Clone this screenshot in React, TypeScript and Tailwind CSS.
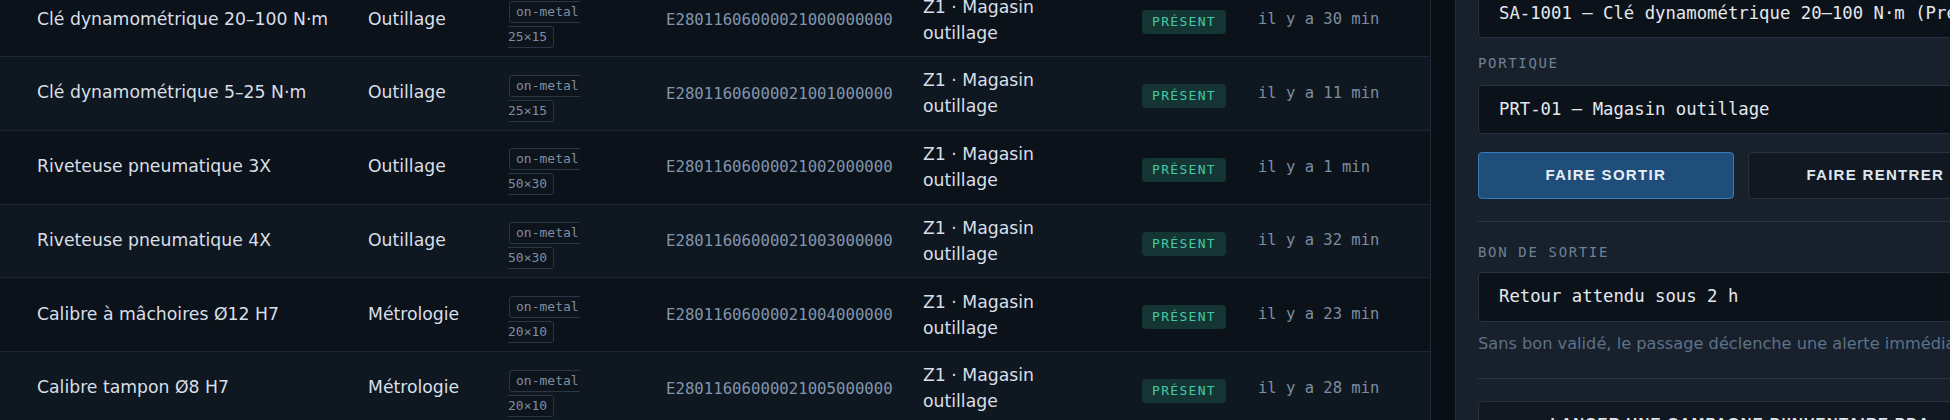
import React from "react";

type Row = {
  name: string;
  cat: string;
  size: string;
  epc: string;
  time: string;
};

const rows: Row[] = [
  { name: "Clé dynamométrique 20–100 N·m", cat: "Outillage", size: "25×15", epc: "E28011606000021000000000", time: "il y a 30 min" },
  { name: "Clé dynamométrique 5–25 N·m", cat: "Outillage", size: "25×15", epc: "E28011606000021001000000", time: "il y a 11 min" },
  { name: "Riveteuse pneumatique 3X", cat: "Outillage", size: "50×30", epc: "E28011606000021002000000", time: "il y a 1 min" },
  { name: "Riveteuse pneumatique 4X", cat: "Outillage", size: "50×30", epc: "E28011606000021003000000", time: "il y a 32 min" },
  { name: "Calibre à mâchoires Ø12 H7", cat: "Métrologie", size: "20×10", epc: "E28011606000021004000000", time: "il y a 23 min" },
  { name: "Calibre tampon Ø8 H7", cat: "Métrologie", size: "20×10", epc: "E28011606000021005000000", time: "il y a 28 min" },
];

const sans = "font-['DejaVu_Sans',sans-serif]";
const mono = "font-['DejaVu_Sans_Mono',monospace]";
const btn = "font-['Liberation_Sans',Arial,sans-serif]";

const Tag = ({ children, className }: { children: React.ReactNode; className?: string }) => (
  <span
    className={`w-max h-[22px] border border-[#283646] rounded-[3px] px-[6px] bg-[#0d141c] text-[13px] leading-[20px] text-[#7d8ea3] ${mono} ${className ?? ""}`}
  >
    {children}
  </span>
);

const TableRow = ({ row, index }: { row: Row; index: number }) => (
  <div
    className={`flex h-[73.75px] border-b border-[#1c2733] ${
      index % 2 === 0 ? "bg-[#0c121a]" : "bg-[#0f1720]"
    }`}
  >
    <div className={`w-[368px] shrink-0 pl-[37px] flex items-center text-[17.25px] text-[#d8dfe8] whitespace-nowrap ${sans}`}>
      {row.name}
    </div>
    <div className={`w-[140px] shrink-0 flex items-center text-[17.25px] text-[#d8dfe8] ${sans}`}>
      {row.cat}
    </div>
    <div className="w-[158px] shrink-0">
      <div className="mt-[17.5px] w-[72px] overflow-hidden flex flex-col gap-[3px]">
        <Tag className="ml-px">on-metal</Tag>
        <Tag className="-ml-[7px]">{row.size}</Tag>
      </div>
    </div>
    <div className={`w-[257px] shrink-0 flex items-center text-[15.7px] text-[#8195ad] ${mono}`}>
      {row.epc}
    </div>
    <div className="w-[219px] shrink-0 flex items-center">
      <div className={`w-[170px] text-[17.25px] leading-[26px] text-[#d8dfe8] ${sans}`}>
        Z1 · Magasin outillage
      </div>
    </div>
    <div className="w-[116px] shrink-0">
      <div
        className={`mt-[27px] w-max h-[24px] px-[10px] rounded-[4px] bg-[#143533] text-[#44c9a6] text-[13px] leading-[24px] tracking-[1.3px] ${mono}`}
      >
        PRÉSENT
      </div>
    </div>
    <div className={`flex-1 flex items-center text-[15.5px] text-[#7d8da0] whitespace-nowrap ${mono}`}>
      {row.time}
    </div>
  </div>
);

const Label = ({ children, className }: { children: React.ReactNode; className?: string }) => (
  <div className={`h-[20px] text-[14px] leading-[20px] tracking-[1.65px] text-[#6d8096] ${mono} ${className ?? ""}`}>
    {children}
  </div>
);

const Field = ({ children, className }: { children: React.ReactNode; className?: string }) => (
  <div
    className={`border border-[#263241] rounded-[4px] bg-[#0c1219] px-[20px] flex items-center overflow-hidden whitespace-nowrap text-[17.3px] text-[#e3e8ef] ${mono} ${className ?? ""}`}
  >
    {children}
  </div>
);

export default function App() {
  return (
    <div className="w-[1950px] h-[420px] overflow-hidden flex bg-[#0a0f15]">
      <div className="w-[1431px] shrink-0 border-r border-[#1f2a36] overflow-hidden">
        <div className="-mt-[16.75px]">
          {rows.map((r, i) => (
            <TableRow key={r.epc} row={r} index={i} />
          ))}
        </div>
      </div>
      <div className="w-[24px] shrink-0" />
      <div className="w-[570px] shrink-0 border-l border-[#222d3b] bg-[#17202b] px-[22px]">
        <div className="-mt-[11px] flex flex-col">
          <Field className="h-[49px]">SA-1001 — Clé dynamométrique 20–100 N·m (Présent)</Field>
          <Label className="mt-[15px]">PORTIQUE</Label>
          <Field className="mt-[12px] h-[49px]">PRT-01 — Magasin outillage</Field>
          <div className="mt-[18px] grid grid-cols-2 gap-[14px]">
            <button
              className={`h-[47px] rounded-[4px] border border-[#3a78b8] bg-[#1f4e7b] text-[#e8eef5] text-[15px] font-bold tracking-[1.3px] ${btn}`}
            >
              FAIRE SORTIR
            </button>
            <button
              className={`h-[47px] rounded-[4px] border border-[#263240] bg-[#111821] text-[#dfe6ee] text-[15px] font-bold tracking-[1.3px] ${btn}`}
            >
              FAIRE RENTRER
            </button>
          </div>
          <div className="mt-[22px] h-px bg-[#2a3644]" />
          <Label className="mt-[20px]">BON DE SORTIE</Label>
          <Field className="mt-[10px] h-[50px]">Retour attendu sous 2 h</Field>
          <div className={`mt-[10px] text-[16.2px] leading-[24px] text-[#5d7189] whitespace-nowrap ${sans}`}>
            Sans bon validé, le passage déclenche une alerte immédiate.
          </div>
          <div className="mt-[22px] h-px bg-[#2a3644]" />
          <button
            className={`mt-[22px] h-[44px] rounded-[4px] border border-[#263240] bg-[#111821] text-[#dfe6ee] text-[15px] font-bold tracking-[1.3px] whitespace-nowrap ${btn}`}
          >
            LANCER UNE CAMPAGNE D'INVENTAIRE PDA
          </button>
        </div>
      </div>
    </div>
  );
}
